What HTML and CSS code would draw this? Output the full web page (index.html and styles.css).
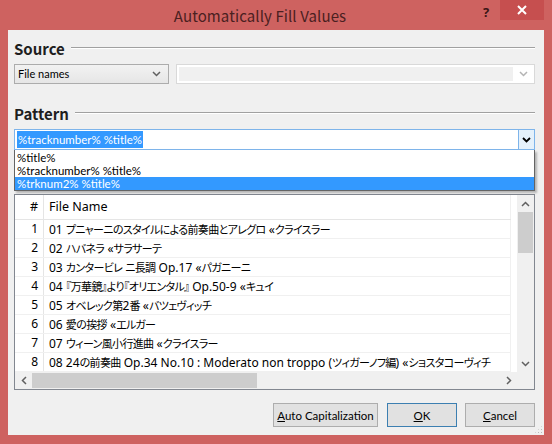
FILE: index.html
```html
<!DOCTYPE html>
<html>
<head>
<meta charset="utf-8">
<link rel="stylesheet" href="styles.css">
</head>
<body>
<div class="window">
  <div class="titlebar">
    <div class="title">Automatically Fill Values</div>
    <div class="help">?</div>
    <div class="close"><svg width="12" height="12" viewBox="0 0 12 12"><path d="M2 2 L10 10 M10 2 L2 10" stroke="#fff" stroke-width="2"/></svg></div>
  </div>
  <div class="client">
    <div class="group-head"><span class="group-label">Source</span><div class="rule"></div></div>
    <div class="source-row">
      <div class="combo">
        <span class="combo-text">File names</span>
        <svg class="chev" width="9" height="6" viewBox="0 0 9 6"><path d="M1 1 L4.5 4.5 L8 1" fill="none" stroke="#606060" stroke-width="1.5"/></svg>
      </div>
      <div class="combo-disabled">
        <div class="cd-field"></div>
        <svg class="chev" width="9" height="6" viewBox="0 0 9 6"><path d="M1 1 L4.5 4.5 L8 1" fill="none" stroke="#b4b4b4" stroke-width="1.5"/></svg>
      </div>
    </div>
    <div class="group-head pattern-head"><span class="group-label">Pattern</span><div class="rule"></div></div>
    <div class="pattern-wrap">
      <div class="edit-combo">
        <div class="edit-field"><span class="sel">%tracknumber% %title%</span></div>
        <div class="edit-btn"><svg width="9" height="6" viewBox="0 0 9 6"><path d="M1 1 L4.5 4.5 L8 1" fill="none" stroke="#000" stroke-width="1.8"/></svg></div>
      </div>
      <div class="dropdown">
        <div class="dd-item">%title%</div>
        <div class="dd-item">%tracknumber% %title%</div>
        <div class="dd-item dd-sel">%trknum2% %title%</div>
      </div>
    </div>
    <div class="table">
      <div class="list">
        <div class="lrow lhead"><div class="c-num">#</div><div class="c-name">File Name</div></div>
        <div class="lrow"><div class="c-num">1</div><div class="c-name">01 <span class="jp">プニャーニのスタイルによる前奏曲とアレグロ</span> «<span class="jp">クライスラー</span></div></div>
        <div class="lrow"><div class="c-num">2</div><div class="c-name">02 <span class="jp">ハバネラ</span> «<span class="jp">サラサーテ</span></div></div>
        <div class="lrow"><div class="c-num">3</div><div class="c-name">03 <span class="jp">カンタービレ</span> <span class="jp">ニ長調</span> Op.17 «<span class="jp">パガニーニ</span></div></div>
        <div class="lrow"><div class="c-num">4</div><div class="c-name">04 <span class="jp">『万華鏡』より『オリエンタル』</span> Op.50-9 «<span class="jp">キュイ</span></div></div>
        <div class="lrow"><div class="c-num">5</div><div class="c-name">05 <span class="jp">オベレック第</span>2<span class="jp">番</span> «<span class="jp">バツェヴィッチ</span></div></div>
        <div class="lrow"><div class="c-num">6</div><div class="c-name">06 <span class="jp">愛の挨拶</span> «<span class="jp">エルガー</span></div></div>
        <div class="lrow"><div class="c-num">7</div><div class="c-name">07 <span class="jp">ウィーン風小行進曲</span> «<span class="jp">クライスラー</span></div></div>
        <div class="lrow"><div class="c-num">8</div><div class="c-name">08 24<span class="jp">の前奏曲</span> Op.34 No.10 : Moderato non troppo (<span class="jp">ツィガーノフ編</span>) «<span class="jp">ショスタコーヴィチ</span></div></div>
      </div>
      <div class="vscroll">
        <div class="arrow"><svg width="9" height="6" viewBox="0 0 9 6"><path d="M1 5 L4.5 1.5 L8 5" fill="none" stroke="#606060" stroke-width="1.5"/></svg></div>
        <div class="vthumb"></div>
        <div class="vspace"></div>
        <div class="arrow"><svg width="9" height="6" viewBox="0 0 9 6"><path d="M1 1 L4.5 4.5 L8 1" fill="none" stroke="#606060" stroke-width="1.5"/></svg></div>
      </div>
      <div class="hscroll">
        <div class="harrow"><svg width="6" height="9" viewBox="0 0 6 9"><path d="M5 1 L1.5 4.5 L5 8" fill="none" stroke="#606060" stroke-width="1.5"/></svg></div>
        <div class="hthumb"></div>
        <div class="hspace"></div>
        <div class="harrow"><svg width="6" height="9" viewBox="0 0 6 9"><path d="M1 1 L4.5 4.5 L1 8" fill="none" stroke="#606060" stroke-width="1.5"/></svg></div>
      </div>
      <div class="corner"></div>
    </div>
    <div class="buttons">
      <div class="btn btn-auto"><span><u>A</u>uto Capitalization</span></div>
      <div class="btn btn-ok"><span><u>O</u>K</span></div>
      <div class="btn btn-cancel"><span><u>C</u>ancel</span></div>
    </div>
    <div class="grip"></div>
  </div>
</div>
</body>
</html>
```
FILE: styles.css
```css
* { box-sizing: border-box; }
html, body { margin: 0; padding: 0; }
body {
  width: 552px;
  height: 444px;
  overflow: hidden;
  font-family: Lato, "Noto Sans CJK JP", sans-serif;
  font-size: 11px;
  color: #000;
}
.window {
  width: 552px;
  height: 444px;
  background: #ce6260;
  display: flex;
  flex-direction: column;
}
.titlebar {
  height: 30px;
  display: flex;
  align-items: flex-start;
  flex: none;
}
.title {
  flex: 1;
  text-align: center;
  padding-left: 44px;
  font-family: "Noto Sans CJK JP", sans-serif;
  font-size: 15px;
  line-height: 32px;
  color: #4a2020;
  letter-spacing: 0.1px;
}
.help {
  width: 20px;
  margin-right: 4px;
  text-align: center;
  font-family: "Noto Sans", sans-serif;
  font-weight: bold;
  font-size: 13px;
  line-height: 24px;
  color: #3a1515;
}
.close {
  width: 44px;
  height: 20px;
  margin-right: 8px;
  background: #c64f4f;
  display: flex;
  align-items: center;
  justify-content: center;
}
.client {
  position: relative;
  margin: 0 8px 9px 8px;
  height: 405px;
  background: #f0f0f0;
  padding: 8px 9px 0 6px;
  display: flex;
  flex-direction: column;
}
.group-head {
  height: 20px;
  display: flex;
  align-items: center;
}
.group-label {
  font-family: "Noto Sans CJK JP", sans-serif;
  font-weight: bold;
  font-size: 15px;
  color: #1e1e1e;
  margin-right: 6px;
}
.rule {
  flex: 1;
  height: 2px;
  border-top: 1px solid #a0a0a0;
  border-bottom: 1px solid #ffffff;
}
.source-row {
  margin-top: 6px;
  height: 20px;
  display: flex;
}
.combo {
  width: 155px;
  height: 20px;
  border: 1px solid #acacac;
  background: linear-gradient(#f2f2f2, #e6e6e6);
  display: flex;
  align-items: center;
  padding: 0 7px 0 3px;
}
.combo-text { flex: 1; line-height: 18px; font-size: 11px; }
.combo-disabled {
  flex: 1;
  margin-left: 7px;
  height: 20px;
  border: 1px solid #d9d9d9;
  background: #fff;
  display: flex;
  align-items: center;
  padding: 2px 6px 2px 2px;
}
.cd-field {
  flex: 1;
  height: 100%;
  background: #f0f0f0;
  margin-right: 6px;
}
.pattern-head { margin-top: 19px; }
.pattern-wrap {
  position: relative;
  margin-top: 6px;
}
.edit-combo {
  height: 21px;
  border: 1px solid #7eb4ea;
  background: #fff;
  display: flex;
}
.edit-field {
  flex: 1;
  padding: 1px 2px;
  display: flex;
  align-items: center;
}
.sel {
  background: #3399ff;
  color: #fff;
  line-height: 17px;
  padding: 0 1px;
  font-size: 11.5px;
}
.edit-btn {
  width: 16px;
  border-left: 1px solid #7eb4ea;
  background: #e5f1fb;
  display: flex;
  align-items: center;
  justify-content: center;
}
.dropdown {
  position: absolute;
  left: 0;
  right: 0;
  top: 21px;
  height: 41px;
  background: #fff;
  border: 1px solid #646464;
  border-top: none;
  box-shadow: 2px 2px 2px rgba(0,0,0,0.25);
  padding-top: 1px;
  z-index: 2;
}
.dd-item {
  height: 13px;
  line-height: 13px;
  padding-left: 2px;
  font-size: 11.5px;
}
.dd-sel {
  background: #3399ff;
  color: #fff;
}
.table {
  margin-top: 44px;
  height: 196px;
  border: 1px solid #828790;
  background: #fff;
  display: grid;
  grid-template-columns: 1fr 17px;
  grid-template-rows: 1fr 17px;
}
.list {
  overflow: hidden;
  position: relative;
  font-family: "Noto Sans", "Noto Sans CJK JP", sans-serif;
  font-size: 12px;
}
.lrow {
  display: flex;
  height: 19px;
  border-bottom: 1px solid #f0f0f0;
  width: 496px;
  white-space: nowrap;
}
.lhead {
  height: 25px;
  border-bottom: 1px solid #e5e5e5;
  font-size: 12.5px;
}
.c-num {
  width: 29px;
  flex: none;
  text-align: right;
  padding-right: 5px;
  border-right: 1px solid #e5e5e5;
  line-height: 18px;
}
.lhead .c-num, .lhead .c-name { line-height: 24px; }
.c-name {
  flex: 1;
  padding-left: 5px;
  overflow: hidden;
  line-height: 18px;
  border-right: 1px solid #f0f0f0;
}
.jp {
  font-family: "Noto Sans CJK JP", sans-serif;
  font-size: 11px;
  font-feature-settings: "palt";
  letter-spacing: -0.65px;
}
.vscroll {
  background: #f0f0f0;
  display: flex;
  flex-direction: column;
}
.arrow {
  height: 17px;
  display: flex;
  align-items: center;
  justify-content: center;
}
.vthumb {
  height: 41px;
  margin: 0 1px;
  background: #cdcdcd;
}
.vspace { flex: 1; }
.hscroll {
  background: #f0f0f0;
  display: flex;
}
.harrow {
  width: 17px;
  display: flex;
  align-items: center;
  justify-content: center;
}
.hthumb {
  width: 225px;
  margin: 1px 0;
  background: #cdcdcd;
}
.hspace { flex: 1; }
.corner { background: #f0f0f0; }
.buttons {
  margin-top: 13px;
  display: flex;
  justify-content: flex-end;
}
.btn {
  height: 24px;
  border: 1px solid #adadad;
  background: #e1e1e1;
  display: flex;
  align-items: center;
  justify-content: center;
  font-size: 11.5px;
  white-space: nowrap;
}
.btn-auto { width: 105px; margin-right: 9px; }
.btn-ok { width: 70px; margin-right: 8px; border-color: #3c7fb1; }
.btn-cancel { width: 70px; }
.grip {
  position: absolute;
  right: 1px;
  bottom: 1px;
  width: 9px;
  height: 9px;
  background-image: radial-gradient(circle, #b8b8b8 0.8px, transparent 1px);
  background-size: 3px 3px;
  clip-path: polygon(100% 0, 100% 100%, 0 100%);
}
```
